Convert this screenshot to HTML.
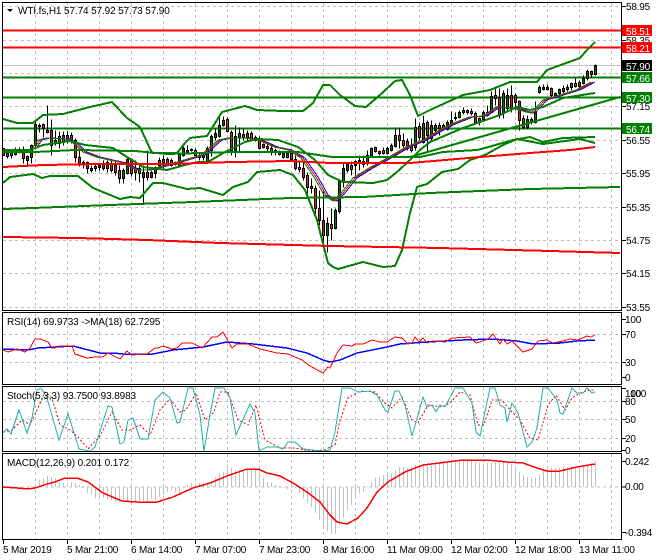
<!DOCTYPE html>
<html><head><meta charset="utf-8"><style>
html,body{margin:0;padding:0;background:#fff;width:660px;height:560px;overflow:hidden}
svg{display:block}
text{font-family:"Liberation Sans",sans-serif;font-size:10px;fill:#000;letter-spacing:-.2px}
.l{letter-spacing:-.12px}
path{shape-rendering:crispEdges}
.g{fill:none;stroke:#007f00;stroke-width:2;stroke-linejoin:round}
.r{fill:none;stroke:#f00;stroke-width:2}
.t{fill:none;stroke-width:1}
.w{fill:#fff}
</style></head><body>
<svg width="660" height="560" viewBox="0 0 660 560" xmlns="http://www.w3.org/2000/svg">
<rect width="660" height="560" fill="#fff"/>
<!-- grid -->
<g fill="none" stroke="#c0c0c0" stroke-width="1" stroke-dasharray="3 3" shape-rendering="crispEdges">
<path d="M35.5 3V310M67.5 3V310M99.5 3V310M131.5 3V310M163.5 3V310M195.5 3V310M227.5 3V310M259.5 3V310M291.5 3V310M323.5 3V310M355.5 3V310M387.5 3V310M419.5 3V310M451.5 3V310M483.5 3V310M515.5 3V310M547.5 3V310M579.5 3V310M611.5 3V310"/>
<path d="M35.5 313V384M67.5 313V384M99.5 313V384M131.5 313V384M163.5 313V384M195.5 313V384M227.5 313V384M259.5 313V384M291.5 313V384M323.5 313V384M355.5 313V384M387.5 313V384M419.5 313V384M451.5 313V384M483.5 313V384M515.5 313V384M547.5 313V384M579.5 313V384M611.5 313V384"/>
<path d="M35.5 387V451M67.5 387V451M99.5 387V451M131.5 387V451M163.5 387V451M195.5 387V451M227.5 387V451M259.5 387V451M291.5 387V451M323.5 387V451M355.5 387V451M387.5 387V451M419.5 387V451M451.5 387V451M483.5 387V451M515.5 387V451M547.5 387V451M579.5 387V451M611.5 387V451"/>
<path d="M35.5 454V539M67.5 454V539M99.5 454V539M131.5 454V539M163.5 454V539M195.5 454V539M227.5 454V539M259.5 454V539M291.5 454V539M323.5 454V539M355.5 454V539M387.5 454V539M419.5 454V539M451.5 454V539M483.5 454V539M515.5 454V539M547.5 454V539M579.5 454V539M611.5 454V539"/>
<path d="M3 6.5H621M3 40.5H621M3 73.5H621M3 106.5H621M3 140.5H621M3 173.5H621M3 207.5H621M3 240.5H621M3 273.5H621M3 307.5H621"/>
<path d="M3 334.5H621M3 362.5H621M3 401.5H621M3 419.5H621M3 438.5H621M3 487H621"/>
</g>
<path d="M3 65.5H621" stroke="#c0c0c0" fill="none"/>
<!-- horizontal levels -->
<path class="r" d="M3 30.5H621M3 47.5H621"/>
<path class="g" d="M3 77.5H621M3 97.5H621M3 128.5H621"/>
<!-- candles -->
<g transform="translate(.5 .5)">
<path fill="none" stroke="#000" d="M3 148V155M7 152V158M11 150V158M15 147V155M19 147V153M23 146V163M27 155V166M31 144V163M35 121V146M39 123V132M43 123V137M47 105V133M51 119V155M55 130V145M59 131V148M63 131V145M67 131V143M71 132V143M75 138V162M79 150V166M83 160V168M87 161V173M91 165V172M95 163V171M99 163V170M103 160V170M107 160V172M111 160V172M115 160V175M119 165V183M123 168V183M127 158V174M131 158V176M135 160V180M139 165V182M143 165V203M147 150V180M151 170V178M155 166V178M159 157V168M163 155V170M167 157V165M171 158V166M175 161V165M179 152V167M183 146V156M187 145V153M191 148V151M195 148V157M199 152V160M203 152V160M207 146V163M211 134V156M215 128V140M219 116V137M223 116V126M227 117V132M231 130V155M235 125V157M239 127V152M243 128V140M247 130V140M251 131V141M255 135V141M259 136V149M263 143V148M267 144V152M271 145V155M275 148V155M279 150V155M283 152V158M287 152V158M291 150V161M295 155V170M299 160V172M303 160V180M307 172V195M311 178V193M315 185V215M319 190V225M323 190V245M327 217V252M331 208V240M335 208V229M339 179V213M343 163V187M347 162V172M351 161V175M355 160V175M359 155V170M363 155V167M367 150V165M371 147V157M375 146V152M379 150V155M383 147V154M387 146V154M391 143V151M395 127V147M399 127V148M403 133V147M407 138V150M411 138V152M415 118V150M419 122V140M423 115V143M427 120V152M431 120V140M435 123V135M439 122V135M443 123V130M447 120V130M451 111V126M455 112V120M459 110V118M463 107V114M467 109V114M471 108V115M475 111V123M479 117V125M483 110V120M487 105V116M491 91V113M495 88V105M499 88V118M503 90V118M507 88V110M511 85V112M515 93V110M519 100V130M523 115V129M527 115V129M531 117V124M535 101V123M539 85V93M543 84V90M547 84V90M551 87V97M555 92V98M559 88V94M563 85V93M567 84V91M571 82V90M575 78V87M579 80V88M583 75V84M587 69V80M591 70V77M595 64V75"/>
<path fill="#d82020" stroke="#000" d="M2 148h2V155h-2zM6 153h2V156h-2zM22 152h2V158h-2zM42 124h2V128h-2zM46 130h2V132h-2zM50 130h2V145h-2zM62 135h2V142h-2zM70 135h2V140h-2zM74 140h2V157h-2zM78 157h2V163h-2zM86 162h2V168h-2zM102 163h2V168h-2zM110 163h2V170h-2zM114 165h2V172h-2zM118 170h2V178h-2zM130 159h2V173h-2zM134 168h2V172h-2zM138 168h2V173h-2zM146 172h2V177h-2zM158 160h2V165h-2zM166 159h2V163h-2zM170 160h2V165h-2zM194 150h2V155h-2zM226 119h2V131h-2zM230 132h2V150h-2zM242 134h2V137h-2zM250 133h2V140h-2zM254 137h2V140h-2zM258 139h2V148h-2zM262 144h2V147h-2zM270 148h2V152h-2zM274 150h2V152h-2zM278 152h2V154h-2zM290 153h2V159h-2zM294 159h2V168h-2zM298 167h2V169h-2zM302 168h2V177h-2zM306 175h2V187h-2zM310 186h2V188h-2zM314 188h2V208h-2zM318 208h2V220h-2zM322 220h2V235h-2zM330 224h2V228h-2zM350 165h2V169h-2zM362 161h2V164h-2zM374 147h2V151h-2zM378 151h2V153h-2zM382 150h2V153h-2zM398 135h2V140h-2zM402 140h2V145h-2zM406 141h2V148h-2zM410 145h2V150h-2zM418 126h2V137h-2zM426 122h2V135h-2zM438 125h2V128h-2zM442 125h2V129h-2zM470 111h2V113h-2zM474 113h2V122h-2zM478 118h2V122h-2zM486 112h2V115h-2zM494 95h2V98h-2zM498 97h2V115h-2zM510 95h2V108h-2zM514 95h2V102h-2zM518 101h2V120h-2zM522 118h2V127h-2zM550 88h2V95h-2zM566 87h2V89h-2zM574 83h2V86h-2zM578 82h2V86h-2zM590 71h2V74h-2z"/>
<path fill="#0a6a0a" stroke="#000" d="M10 150h2V155h-2zM14 149h2V154h-2zM18 149h2V152h-2zM26 156h2V160h-2zM30 145h2V157h-2zM34 124h2V145h-2zM38 125h2V126h-2zM54 140h2V142h-2zM58 136h2V143h-2zM66 135h2V140h-2zM82 162h2V163h-2zM90 168h2V170h-2zM94 166h2V168h-2zM98 165h2V167h-2zM106 162h2V168h-2zM122 170h2V178h-2zM126 159h2V173h-2zM142 172h2V177h-2zM150 172h2V177h-2zM154 167h2V173h-2zM162 159h2V165h-2zM174 162h2V164h-2zM178 154h2V166h-2zM182 148h2V155h-2zM186 150h2V152h-2zM190 149h2V150h-2zM198 155h2V157h-2zM202 155h2V157h-2zM206 148h2V162h-2zM210 136h2V150h-2zM214 133h2V137h-2zM218 125h2V136h-2zM222 120h2V125h-2zM234 136h2V150h-2zM238 133h2V137h-2zM246 133h2V138h-2zM266 146h2V148h-2zM282 153h2V157h-2zM286 153h2V157h-2zM326 223h2V235h-2zM334 210h2V228h-2zM338 181h2V211h-2zM342 168h2V182h-2zM346 164h2V170h-2zM354 161h2V165h-2zM358 160h2V163h-2zM366 155h2V163h-2zM370 148h2V156h-2zM386 148h2V153h-2zM390 145h2V150h-2zM394 135h2V146h-2zM414 127h2V147h-2zM422 123h2V142h-2zM430 125h2V138h-2zM434 125h2V130h-2zM446 122h2V129h-2zM450 120h2V125h-2zM454 117h2V118h-2zM458 112h2V117h-2zM462 110h2V112h-2zM466 110h2V112h-2zM482 112h2V119h-2zM490 96h2V112h-2zM502 93h2V113h-2zM506 95h2V108h-2zM526 119h2V127h-2zM530 119h2V122h-2zM534 112h2V122h-2zM538 87h2V92h-2zM542 87h2V89h-2zM546 87h2V89h-2zM554 93h2V95h-2zM558 89h2V93h-2zM562 88h2V91h-2zM570 83h2V87h-2zM582 78h2V83h-2zM586 71h2V78h-2zM594 65h2V74h-2z"/>
</g>
<!-- thin MAs -->
<path class="t" stroke="#0000ff" d="M37 147L42 140L50 138L70 139L77 143L87 152L100 157L113 160L127 163L140 170L150 170L163 167L178 163L205 155L222 140L232 138L248 138L262 140L278 147L292 150L305 158L318 177L328 195L337 201L345 193L357 178L373 168L393 157L410 147L427 140L440 132L453 125L473 117L487 116L500 107L517 108L530 112L535 113L547 100L557 97L580 90L595 82"/>
<path class="t" stroke="#ff0000" transform="translate(-2 0)" d="M37 147L42 140L50 138L70 139L77 143L87 152L100 157L113 160L127 163L140 170L150 170L163 167L178 163L205 155L222 140L232 138L248 138L262 140L278 147L292 150L305 158L318 177L328 195L337 201L345 193L357 178L373 168L393 157L410 147L427 140L440 132L453 125L473 117L487 116L500 107L517 108L530 112L535 113L547 100L557 97L580 90L595 82"/>
<path class="t" stroke="#007f00" transform="translate(-4 0)" d="M37 147L42 140L50 138L70 139L77 143L87 152L100 157L113 160L127 163L140 170L150 170L163 167L178 163L205 155L222 140L232 138L248 138L262 140L278 147L292 150L305 158L318 177L328 195L337 201L345 193L357 178L373 168L393 157L410 147L427 140L440 132L453 125L473 117L487 116L500 107L517 108L530 112L535 113L547 100L557 97L580 90L595 82"/>
<!-- bands -->
<path class="g" d="M3 119L17 123L33 123L43 115L63 114L90 107L112 102L127 118L140 127L152 153L177 153L185 143L190 138L207 136L222 112L245 106L257 110L283 111L303 111L313 103L323 85L330 85L340 95L355 106L366 107L380 95L395 81L402 80L410 95L418 116L430 110L463 95L490 90L510 82L537 82L547 70L580 58L587 50L595 42"/>
<path class="g" d="M3 183L10 177L33 174L42 178L50 176L78 176L93 188L120 199L130 197L140 198L153 183L163 183L187 189L200 188L223 195L233 187L248 182L257 172L280 170L293 175L305 190L317 220L328 263L333 267L338 269L363 262L383 267L395 266L402 250L410 213L417 187L427 184L442 172L458 169L470 160L485 155L503 145L517 139L543 144L580 139L595 143"/>
<path class="g" d="M3 150L30 150L43 145L70 141L85 145L113 148L127 157L143 167L167 170L185 165L198 162L208 162L225 152L245 142L258 139L278 140L298 147L315 160L328 175L343 182L373 183L387 180L397 172L410 160L420 150L430 142L463 128L500 115L517 107L530 110L543 107L563 98L595 93"/>
<path class="g" d="M3 152L35 152L75 150L135 151L167 154L200 153L235 152L298 152L332 157L370 157L420 157L443 152L477 150L485 148L513 140L530 137L543 142L563 138L595 137"/>
<path class="g" d="M410 157L480 137L620 97"/>
<path class="g" d="M3 209L33 208L110 205L193 202L290 198L363 197L430 193L530 189L620 187"/>
<path class="r" d="M3 167L43 165L100 164L167 164L233 162L290 161L330 163L410 163L480 157L530 153L570 150L595 147"/>
<path class="r" d="M3 237L77 238L147 240L220 243L293 245L330 246L440 248L550 251L620 253"/>
<!-- RSI -->
<path class="t" stroke="#0000ff" style="stroke-width:1.5" d="M3 349L28 350L38 348L73 346L100 353L113 353L123 354L153 354L173 350L203 347L227 342L253 344L287 348L307 353L323 360L330 362L340 360L357 353L387 347L400 344L427 342L463 340L493 339L517 341L533 344L560 343L577 341L595 340"/>
<path class="t" stroke="#ff0000" d="M3 350L8 352L17 349L25 352L30 348L35 339L40 339L48 342L52 348L55 348L59 346L72 346L75 354L87 358L95 357L103 357L108 353L120 359L127 351L132 355L147 354L155 348L158 348L163 346L172 349L177 348L182 343L192 343L202 348L212 337L217 337L223 332L232 348L237 344L248 344L260 349L277 353L288 354L302 360L310 366L323 373L328 367L330 368L337 353L343 345L352 346L355 344L363 344L372 340L380 342L387 342L395 337L402 338L408 344L412 343L415 337L419 342L423 338L427 343L432 341L445 342L452 338L470 337L476 343L480 342L488 339L493 334L500 344L503 339L507 344L512 341L523 352L532 349L538 341L547 340L553 343L563 341L570 339L578 340L587 336L591 337L595 335"/>
<!-- Stoch -->
<path class="t" stroke="#ff0000" stroke-dasharray="2 2" d="M3 432L12 430L22 420L30 425L38 408L45 392L52 398L60 425L70 430L78 437L88 449L100 436L112 412L122 430L130 430L140 425L150 435L160 410L170 399L180 412L186 410L196 393L205 420L214 412L220 392L228 392L238 420L248 425L256 405L265 440L280 448L295 448L310 451L325 450L330 447L335 445L340 420L348 398L360 391L375 392L385 403L392 408L402 397L412 420L418 423L428 405L442 407L450 403L460 392L470 395L478 425L484 425L492 400L502 400L512 412L520 420L530 438L538 440L548 405L556 395L565 410L572 398L580 393L590 390L595 390"/>
<path class="t" stroke="#20b2aa" d="M3 433L7 429L11 434L19 410L27 433L32 418L37 390L41 388L47 398L59 440L68 414L79 449L90 451L95 447L108 406L112 407L120 444L124 442L128 420L133 418L140 439L148 439L155 400L163 392L170 398L177 423L180 422L188 388L193 388L200 415L204 451L210 415L215 388L224 388L230 398L236 435L250 404L255 413L259 451L267 447L277 447L283 449L288 442L295 442L303 449L323 451L330 450L335 432L342 388L350 388L358 392L370 391L377 395L385 410L388 412L395 391L399 391L405 405L412 436L418 415L423 397L427 407L432 405L436 412L440 405L445 407L455 388L463 388L472 403L476 432L480 436L490 388L495 388L500 405L505 408L507 422L512 403L518 413L527 447L532 442L537 428L543 388L548 388L557 400L560 413L563 414L572 388L577 393L583 393L587 388L592 393L595 392"/>
<!-- MACD -->
<path fill="none" stroke="#c0c0c0" d="M3.5 487V486M7.5 487V486M11.5 487V486M15.5 487V488M19.5 487V488M23.5 487V488M27.5 487V488M31.5 487V486M35.5 487V485M39.5 487V480M43.5 487V478M47.5 487V476M51.5 487V477M55.5 487V478M59.5 487V482M63.5 487V483M67.5 487V483M71.5 487V482M75.5 487V483M79.5 487V485M83.5 487V488M87.5 487V493M91.5 487V494M95.5 487V498M99.5 487V499M103.5 487V498M107.5 487V499M111.5 487V500M115.5 487V501M119.5 487V502M123.5 487V502M127.5 487V502M131.5 487V502M135.5 487V502M139.5 487V502M143.5 487V502M147.5 487V502M151.5 487V499M155.5 487V500M159.5 487V497M163.5 487V495M167.5 487V492M171.5 487V490M175.5 487V492M179.5 487V493M183.5 487V488M187.5 487V485M191.5 487V483M195.5 487V483M199.5 487V483M203.5 487V482M207.5 487V482M211.5 487V482M215.5 487V477M219.5 487V473M223.5 487V472M227.5 487V464M231.5 487V468M235.5 487V470M239.5 487V472M243.5 487V470M247.5 487V470M251.5 487V470M255.5 487V470M259.5 487V475M263.5 487V478M267.5 487V482M271.5 487V483M275.5 487V485M279.5 487V486M283.5 487V488M287.5 487V489M291.5 487V483M295.5 487V488M299.5 487V493M303.5 487V498M307.5 487V503M311.5 487V507M315.5 487V513M319.5 487V520M323.5 487V528M327.5 487V531M331.5 487V534M335.5 487V534M339.5 487V525M343.5 487V518M347.5 487V510M351.5 487V505M355.5 487V497M359.5 487V493M363.5 487V492M367.5 487V486M371.5 487V482M375.5 487V478M379.5 487V477M383.5 487V475M387.5 487V473M391.5 487V473M395.5 487V470M399.5 487V467M403.5 487V467M407.5 487V468M411.5 487V467M415.5 487V465M419.5 487V465M423.5 487V464M427.5 487V464M431.5 487V463M435.5 487V463M439.5 487V463M443.5 487V462M447.5 487V462M451.5 487V461M455.5 487V461M459.5 487V460M463.5 487V459M467.5 487V459M471.5 487V461M475.5 487V462M479.5 487V463M483.5 487V464M487.5 487V463M491.5 487V463M495.5 487V462M499.5 487V462M503.5 487V462M507.5 487V462M511.5 487V464M515.5 487V466M519.5 487V472M523.5 487V475M527.5 487V477M531.5 487V478M535.5 487V478M539.5 487V475M543.5 487V471M547.5 487V468M551.5 487V468M555.5 487V468M559.5 487V468M563.5 487V467M567.5 487V467M571.5 487V467M575.5 487V467M579.5 487V466M583.5 487V465M587.5 487V465M591.5 487V463M595.5 487V461"/>
<path class="t" stroke="#ff0000" style="stroke-width:1.5" d="M3 487L17 488L28 489L35 488L47 484L55 482L65 478L77 478L88 482L103 493L122 501L137 502L157 502L173 497L193 488L210 483L227 476L247 469L258 469L267 473L280 476L293 483L307 492L320 502L330 515L337 522L347 524L358 518L367 508L377 492L388 482L405 472L423 465L447 462L463 460L487 460L507 462L523 463L537 468L547 471L560 471L577 467L595 464"/>
<!-- frames -->
<g fill="none" stroke="#000">
<path d="M2.5 2.5H621.5V310.5H2.5Z"/>
<path d="M2.5 312.5H621.5V384.5H2.5Z"/>
<path d="M2.5 386.5H621.5V451.5H2.5Z"/>
<path d="M2.5 453.5H621.5V539.5H2.5Z"/>
<path d="M3.5 540V544M67.5 540V544M131.5 540V544M195.5 540V544M259.5 540V544M323.5 540V544M387.5 540V544M451.5 540V544M515.5 540V544M579.5 540V544"/>
<path d="M622 6.5h4M622 40.5h4M622 73.5h4M622 106.5h4M622 140.5h4M622 173.5h4M622 207.5h4M622 240.5h4M622 273.5h4M622 307.5h4M622 319.5h4M622 334.5h4M622 362.5h4M622 377.5h4M622 388.5h4M622 401.5h4M622 419.5h4M622 438.5h4M622 450.5h4M622 461.5h4M622 487h4M622 532.5h4"/>
</g>
<!-- title texts -->
<path d="M7 9h6l-3 3z" fill="#000" style="shape-rendering:auto"/>
<text class="l" x="18" y="14">WTI.fs,H1  57.74 57.92 57.73 57.90</text>
<text class="l" x="7" y="325">RSI(14) 69.9733  -&gt;MA(18) 62.7295</text>
<text class="l" x="7" y="399">Stoch(5,3,3) 93.7500 93.8983</text>
<text class="l" x="7" y="466">MACD(12,26,9) 0.201 0.172</text>
<!-- right axis -->
<text x="626" y="10">58.95</text>
<text x="626" y="44">58.35</text>
<text x="626" y="110">57.15</text>
<text x="626" y="144">56.55</text>
<text x="626" y="177">55.95</text>
<text x="626" y="211">55.35</text>
<text x="626" y="244">54.75</text>
<text x="626" y="277">54.15</text>
<text x="626" y="311">53.55</text>
<rect x="622" y="25" width="30" height="11" fill="#f00"/><text class="w" x="626" y="35">58.51</text>
<rect x="622" y="42" width="30" height="11" fill="#f00"/><text class="w" x="626" y="52">58.21</text>
<rect x="622" y="60" width="30" height="11" fill="#000"/><text class="w" x="626" y="70">57.90</text>
<rect x="622" y="72" width="30" height="11" fill="#007f00"/><text class="w" x="626" y="82">57.66</text>
<rect x="622" y="92" width="30" height="11" fill="#007f00"/><text class="w" x="626" y="102">57.30</text>
<rect x="622" y="123" width="30" height="11" fill="#007f00"/><text class="w" x="626" y="133">56.74</text>
<text x="625" y="323">100</text><text x="625" y="338">70</text><text x="625" y="366">30</text><text x="625" y="381">0</text>
<text x="625" y="397">100</text><text x="630" y="397">100</text><text x="625" y="405">80</text><text x="625" y="423">50</text><text x="625" y="442">20</text><text x="625" y="454">0</text>
<text x="625" y="465">0.242</text><text x="625" y="490">0.00</text><text x="625" y="536">-0.394</text>
<!-- time axis -->
<text x="3" y="553">5 Mar 2019</text>
<text x="67" y="553">5 Mar 21:00</text>
<text x="131" y="553">6 Mar 14:00</text>
<text x="195" y="553">7 Mar 07:00</text>
<text x="259" y="553">7 Mar 23:00</text>
<text x="323" y="553">8 Mar 16:00</text>
<text x="387" y="553">11 Mar 09:00</text>
<text x="451" y="553">12 Mar 02:00</text>
<text x="515" y="553">12 Mar 18:00</text>
<text x="579" y="553">13 Mar 11:00</text>
</svg>
</body></html>
